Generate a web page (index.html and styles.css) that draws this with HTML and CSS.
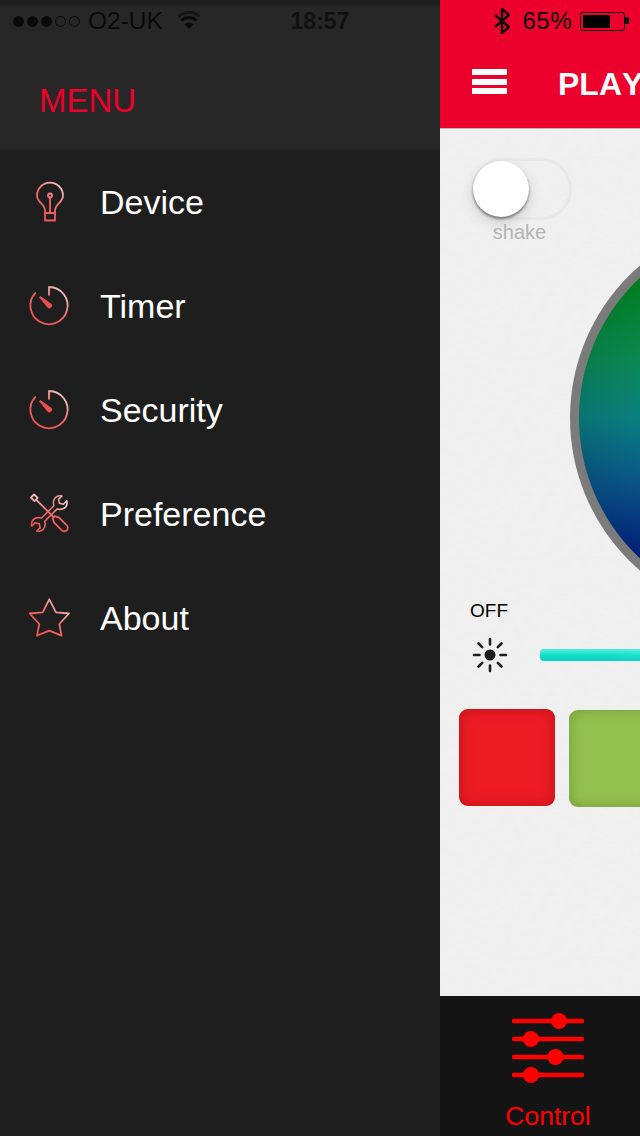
FILE: index.html
```html
<!DOCTYPE html>
<html lang="en">

<head>
    <meta charset="UTF-8">
    <meta name="viewport" content="width=device-width, initial-scale=1.0">
    <title>Control</title>
    <link rel="stylesheet" href="styles.css">
</head>

<body>

    <div class="statusBar">
        <div class="statusLeft">
            <span class="signal"><i class="on"></i><i class="on"></i><i class="on"></i><i></i><i></i></span>
            <span class="carrier">O2-UK</span>
            <svg class="wifi" width="24" height="18" viewBox="0 0 24 18">
                <path d="M12 18 L7.5 13.2 A6.5 6.5 0 0 1 16.5 13.2 Z" fill="#0a0a0a" />
                <path d="M4.6 9.6 A10.5 10.5 0 0 1 19.4 9.6" fill="none" stroke="#0a0a0a" stroke-width="3" />
                <path d="M1.3 5.8 A15 15 0 0 1 22.7 5.8" fill="none" stroke="#161616" stroke-width="3" />
            </svg>
        </div>
        <span class="time">18:57</span>
        <div class="statusRight">
            <svg class="bluetooth" width="16" height="26" viewBox="0 0 16 26">
                <path d="M1 7 L15 19 L8 25 V1 L15 7 L1 19" fill="none" stroke="#0a0a0a" stroke-width="2.4" />
            </svg>
            <span class="percent">65%</span>
            <div class="battery"><div class="batteryLevel"></div></div>
        </div>
    </div>

    <nav class="drawer">
        <h2 class="drawerTitle">MENU</h2>
        <ul class="menu">
            <li class="menuItem">
                <svg class="menuIcon" width="40" height="40" viewBox="0 0 40 40">
                    <defs>
                        <linearGradient id="iconStroke" gradientUnits="userSpaceOnUse" x1="4" y1="38" x2="36" y2="2">
                            <stop offset="0" stop-color="#f04c4e" />
                            <stop offset="0.55" stop-color="#f26a6a" />
                            <stop offset="1" stop-color="#f3d6d4" />
                        </linearGradient>
                    </defs>
                    <path d="M16 31 V28 C15.5 22 8 20 8 13.7 A13 13 0 0 1 34 13.7 C34 20 26.5 22 26 28 V31" />
                    <rect x="16" y="31" width="10" height="7.500" />
                    <circle cx="21" cy="13.5" r="2" />
                    <path d="M21 15.5 V31" />
                </svg>
                <span>Device</span>
            </li>
            <li class="menuItem">
                <svg class="menuIcon" width="40" height="40" viewBox="0 0 40 40">
                    <path d="M20 9.5 V1 A18.6 18.6 0 1 1 6.7 6.6" />
                    <path class="needle" d="M10 11.2 L11.4 10 L22.2 17.8 A2.6 2.6 0 0 1 18.4 21.6 Z" />
                </svg>
                <span>Timer</span>
            </li>
            <li class="menuItem">
                <svg class="menuIcon" width="40" height="40" viewBox="0 0 40 40">
                    <path d="M20 9.5 V1 A18.6 18.6 0 1 1 6.7 6.6" />
                    <path class="needle" d="M10 11.2 L11.4 10 L22.2 17.8 A2.6 2.6 0 0 1 18.4 21.6 Z" />
                </svg>
                <span>Security</span>
            </li>
            <li class="menuItem">
                <svg class="menuIcon" width="40" height="40" viewBox="0 0 40 40">
                    <path transform="translate(20.3 19.5) rotate(45) scale(0.87)" d="M-2.6 -10 C-6 -12 -8 -15 -8 -18 C-8 -21 -6.5 -23 -4 -24.5 L-4 -19 L0 -16.5 L4 -19 L4 -24.5 C6.5 -23 8 -21 8 -18 C8 -15 6 -12 2.6 -10 L2.6 10 C6 12 8 15 8 18 C8 21 6.5 23 4 24.5 L4 19 L0 16.5 L-4 19 L-4 24.5 C-6.5 23 -8 21 -8 18 C-8 15 -6 12 -2.6 10 Z" />
                    <path transform="translate(20.5 19) rotate(-45)" d="M-2.2 -24 H2.2 V-19 H-2.2 Z M0 -19 V6 M-1.5 6 H1.5 L3.5 10 V21 A3.5 3.5 0 0 1 -3.5 21 V10 Z" />
                </svg>
                <span>Preference</span>
            </li>
            <li class="menuItem">
                <svg class="menuIcon" width="40" height="40" viewBox="0 0 40 40">
                    <path d="M20.3 1.3 L27 14.3 L40 15.5 L30.3 26 L32.5 37.7 L20.3 32.7 L8 37.7 L10.3 26 L.7 15.5 L13.7 14.3 Z" />
                </svg>
                <span>About</span>
            </li>
        </ul>
    </nav>

    <main class="panel">
        <header class="panelHeader">
            <div class="hamburger"><i></i><i></i><i></i></div>
            <h1 class="panelTitle">PLAY</h1>
        </header>

        <section class="panelBody">
            <div class="shake">
                <div class="toggle"><div class="knob"></div></div>
                <span class="shakeLabel">shake</span>
            </div>

            <div class="wheelRow">
                <div class="wheel"><div class="wheelInner"></div></div>
            </div>

            <div class="offLabel">OFF</div>

            <div class="brightness">
                <svg class="sun" width="36" height="36" viewBox="-18 -18 36 36">
                    <circle r="5.5" fill="#1c1c1c" />
                    <g stroke="#1c1c1c" stroke-width="2.6" stroke-linecap="round">
                        <path d="M0 -16 V-10.500 M0 16 V10.500 M-16 0 H-10.500 M16 0 H10.500" />
                        <path d="M-11.5 -11.5 L-7.8 -7.8 M11.5 -11.5 L7.8 -7.8 M-11.5 11.5 L-7.8 7.8 M11.5 11.5 L7.8 7.8" />
                    </g>
                </svg>
                <div class="slider"></div>
            </div>

            <div class="swatches">
                <div class="swatch swatchRed"></div>
                <div class="swatch swatchGreen"></div>
            </div>
        </section>

        <footer class="tabBar">
            <svg class="tabIcon" width="72" height="74" viewBox="0 0 72 74">
                <g stroke="#ff0000" stroke-width="4.4" stroke-linecap="round">
                    <path d="M2 9 H70 M2 27 H70 M2 45 H70 M2 63 H70" />
                </g>
                <g fill="#ff0000">
                    <circle cx="47" cy="9" r="8" />
                    <circle cx="19" cy="27" r="8" />
                    <circle cx="43.500" cy="45" r="8" />
                    <circle cx="19" cy="63" r="8" />
                </g>
            </svg>
            <span class="tabLabel">Control</span>
        </footer>
    </main>

</body>

</html>
```

FILE: styles.css
```css
* {
    box-sizing: border-box;
}

body {
    margin: 0;
    width: 640px;
    height: 1136px;
    display: flex;
    position: relative;
    overflow: hidden;
    font-family: "Liberation Sans", Arial, sans-serif;
    background-color: #1e1e1e;
}

/* status bar lies over both the drawer and the panel */
.statusBar {
    position: absolute;
    top: 0;
    left: 0;
    right: 0;
    height: 42px;
    display: grid;
    grid-template-columns: 1fr auto 1fr;
    align-items: center;
    color: #0a0a0a;
    font-size: 24px;
}

.statusLeft {
    display: flex;
    align-items: center;
    padding-left: 13px;
}

.signal {
    display: flex;
    gap: 3px;
}

.signal i {
    width: 11px;
    height: 11px;
    border-radius: 50%;
    border: 1px solid #0a0a0a;
}

.signal i.on {
    background-color: #0a0a0a;
}

.carrier {
    margin-left: 8px;
    font-size: 24.5px;
    font-weight: 300;
}

.wifi {
    margin-left: 14px;
    margin-top: -2px;
}

.time {
    font-size: 23px;
    font-weight: bold;
    color: #111;
}

.statusRight {
    display: flex;
    align-items: center;
    justify-content: flex-end;
    padding-right: 15px;
}

.percent {
    margin-left: 12px;
    letter-spacing: 0.5px;
}

.battery {
    width: 45px;
    height: 19px;
    margin-left: 8px;
    padding: 2px;
    position: relative;
    border: 1px solid #0a0a0a;
    border-radius: 3px;
}

.battery::after {
    content: "";
    position: absolute;
    top: 4px;
    right: -5px;
    width: 4px;
    height: 7px;
    background-color: #0a0a0a;
    border-radius: 0 2px 2px 0;
}

.batteryLevel {
    width: 68%;
    height: 100%;
    background-color: #000;
}

.drawer {
    width: 440px;
    flex: none;
    background-color: #1e1e1e;
}

.drawerTitle {
    height: 150px;
    margin: 0;
    padding: 76px 0 0 39px;
    background-color: #272727;
    color: #ec002c;
    font-size: 33px;
    font-weight: normal;
    line-height: 38px;
    border-top: 6px solid #1f1f1f;
}

.menu {
    list-style: none;
    margin: 0;
    padding: 0;
}

.menuItem {
    height: 104px;
    padding-left: 29px;
    display: flex;
    align-items: center;
    gap: 31px;
    color: #fff;
    font-size: 34px;
}

.menuIcon {
    flex: none;
    overflow: visible;
    fill: none;
    stroke: url(#iconStroke);
    stroke-width: 1.8;
    stroke-linejoin: round;
}

.menuIcon .needle {
    fill: #f04c4e;
    stroke: none;
}

.panel {
    width: 200px;
    flex: none;
    display: flex;
    flex-direction: column;
    overflow: hidden;
}

.panelHeader {
    height: 129px;
    flex: none;
    padding: 41px 0 0 32px;
    display: flex;
    align-items: center;
    gap: 51px;
    background-color: #ec002c;
    border-bottom: 1px solid #b9b9b9;
}

.hamburger {
    width: 35px;
    flex: none;
    margin-bottom: 6px;
    display: flex;
    flex-direction: column;
    gap: 3.5px;
}

.hamburger i {
    height: 6px;
    background-color: #fff;
}

.panelTitle {
    margin: 0;
    flex: none;
    color: #fff;
    font-size: 32px;
    font-weight: bold;
    font-kerning: none;
}

.panelBody {
    flex: 1;
    background-color: #f0f0f0;
    background-image: url("data:image/svg+xml,%3Csvg xmlns='http://www.w3.org/2000/svg' width='200' height='200'%3E%3Cfilter id='n'%3E%3CfeTurbulence type='fractalNoise' baseFrequency='0.12 0.22' numOctaves='3' stitchTiles='stitch'/%3E%3CfeColorMatrix values='0 0 0 0 0.6 0 0 0 0 0.6 0 0 0 0 0.6 0.5 0 0 0 -0.2'/%3E%3C/filter%3E%3Crect width='200' height='200' filter='url(%23n)' opacity='0.22'/%3E%3C/svg%3E");
}

.shake {
    width: 100px;
    margin: 29px 0 0 32px;
    display: flex;
    flex-direction: column;
    align-items: center;
}

.toggle {
    width: 100px;
    height: 62px;
    border: 3px solid #e8e8e8;
    border-radius: 31px;
}

.knob {
    width: 56px;
    height: 56px;
    margin-left: -2px;
    border-radius: 50%;
    background-color: #fff;
    box-shadow: 0 2px 3px rgba(0, 0, 0, 0.45), 0 6px 14px rgba(0, 0, 0, 0.14);
}

.shakeLabel {
    margin: 0 5px 1px 0;
    color: #b4b4b4;
    font-size: 20px;
    line-height: 24px;
}

/* fixed height row, the wheel is taller and hangs out on both sides */
.wheelRow {
    height: 340px;
    margin: 3px 0 0 130px;
    display: flex;
    align-items: center;
}

.wheel {
    width: 402px;
    height: 402px;
    flex: none;
    padding: 9px;
    border-radius: 50%;
    background-color: #7b7b7b;
}

.wheelInner {
    width: 100%;
    height: 100%;
    border-radius: 50%;
    background:
        radial-gradient(closest-side, rgba(0, 0, 0, 0) 70%, rgba(0, 0, 0, 0.1) 100%),
        linear-gradient(#008a1e 12%, #0a8a55 35%, #0a7f80 50%, #09548a 68%, #001c80 88%);
}

.offLabel {
    margin: 11px 0 0 30px;
    font-size: 19px;
    line-height: 24px;
    color: #000;
}

.brightness {
    margin: 14px 0 0 32px;
    display: flex;
    align-items: center;
    gap: 32px;
}

.sun {
    flex: none;
}

.slider {
    flex: none;
    width: 300px;
    height: 12px;
    border-radius: 4px;
    background:
        linear-gradient(90deg, rgba(255, 255, 255, 0) 20%, rgba(255, 255, 255, 0.25) 100%),
        linear-gradient(#4ff0e4, #0fdcc8 55%, #0ed2bf);
}

.swatches {
    margin: 36px 0 0 19px;
    display: flex;
    align-items: flex-start;
    gap: 14px;
}

.swatch {
    width: 96px;
    height: 97px;
    flex: none;
    border-radius: 9px;
}

.swatchRed {
    background-color: #ed1c24;
    box-shadow: inset 0 0 14px rgba(150, 10, 20, 0.55);
}

.swatchGreen {
    margin-top: 1px;
    background-color: #95c14e;
    box-shadow: inset 0 0 14px rgba(90, 120, 40, 0.55);
}

.tabBar {
    height: 140px;
    flex: none;
    padding: 21px 0 0 16px;
    display: flex;
    flex-direction: column;
    align-items: center;
    background-color: #141414;
}

.tabIcon {
    flex: none;
    margin-top: -5px;
}

.tabLabel {
    margin-top: 15px;
    color: #ff0000;
    font-size: 26.5px;
    line-height: 30px;
}
```
